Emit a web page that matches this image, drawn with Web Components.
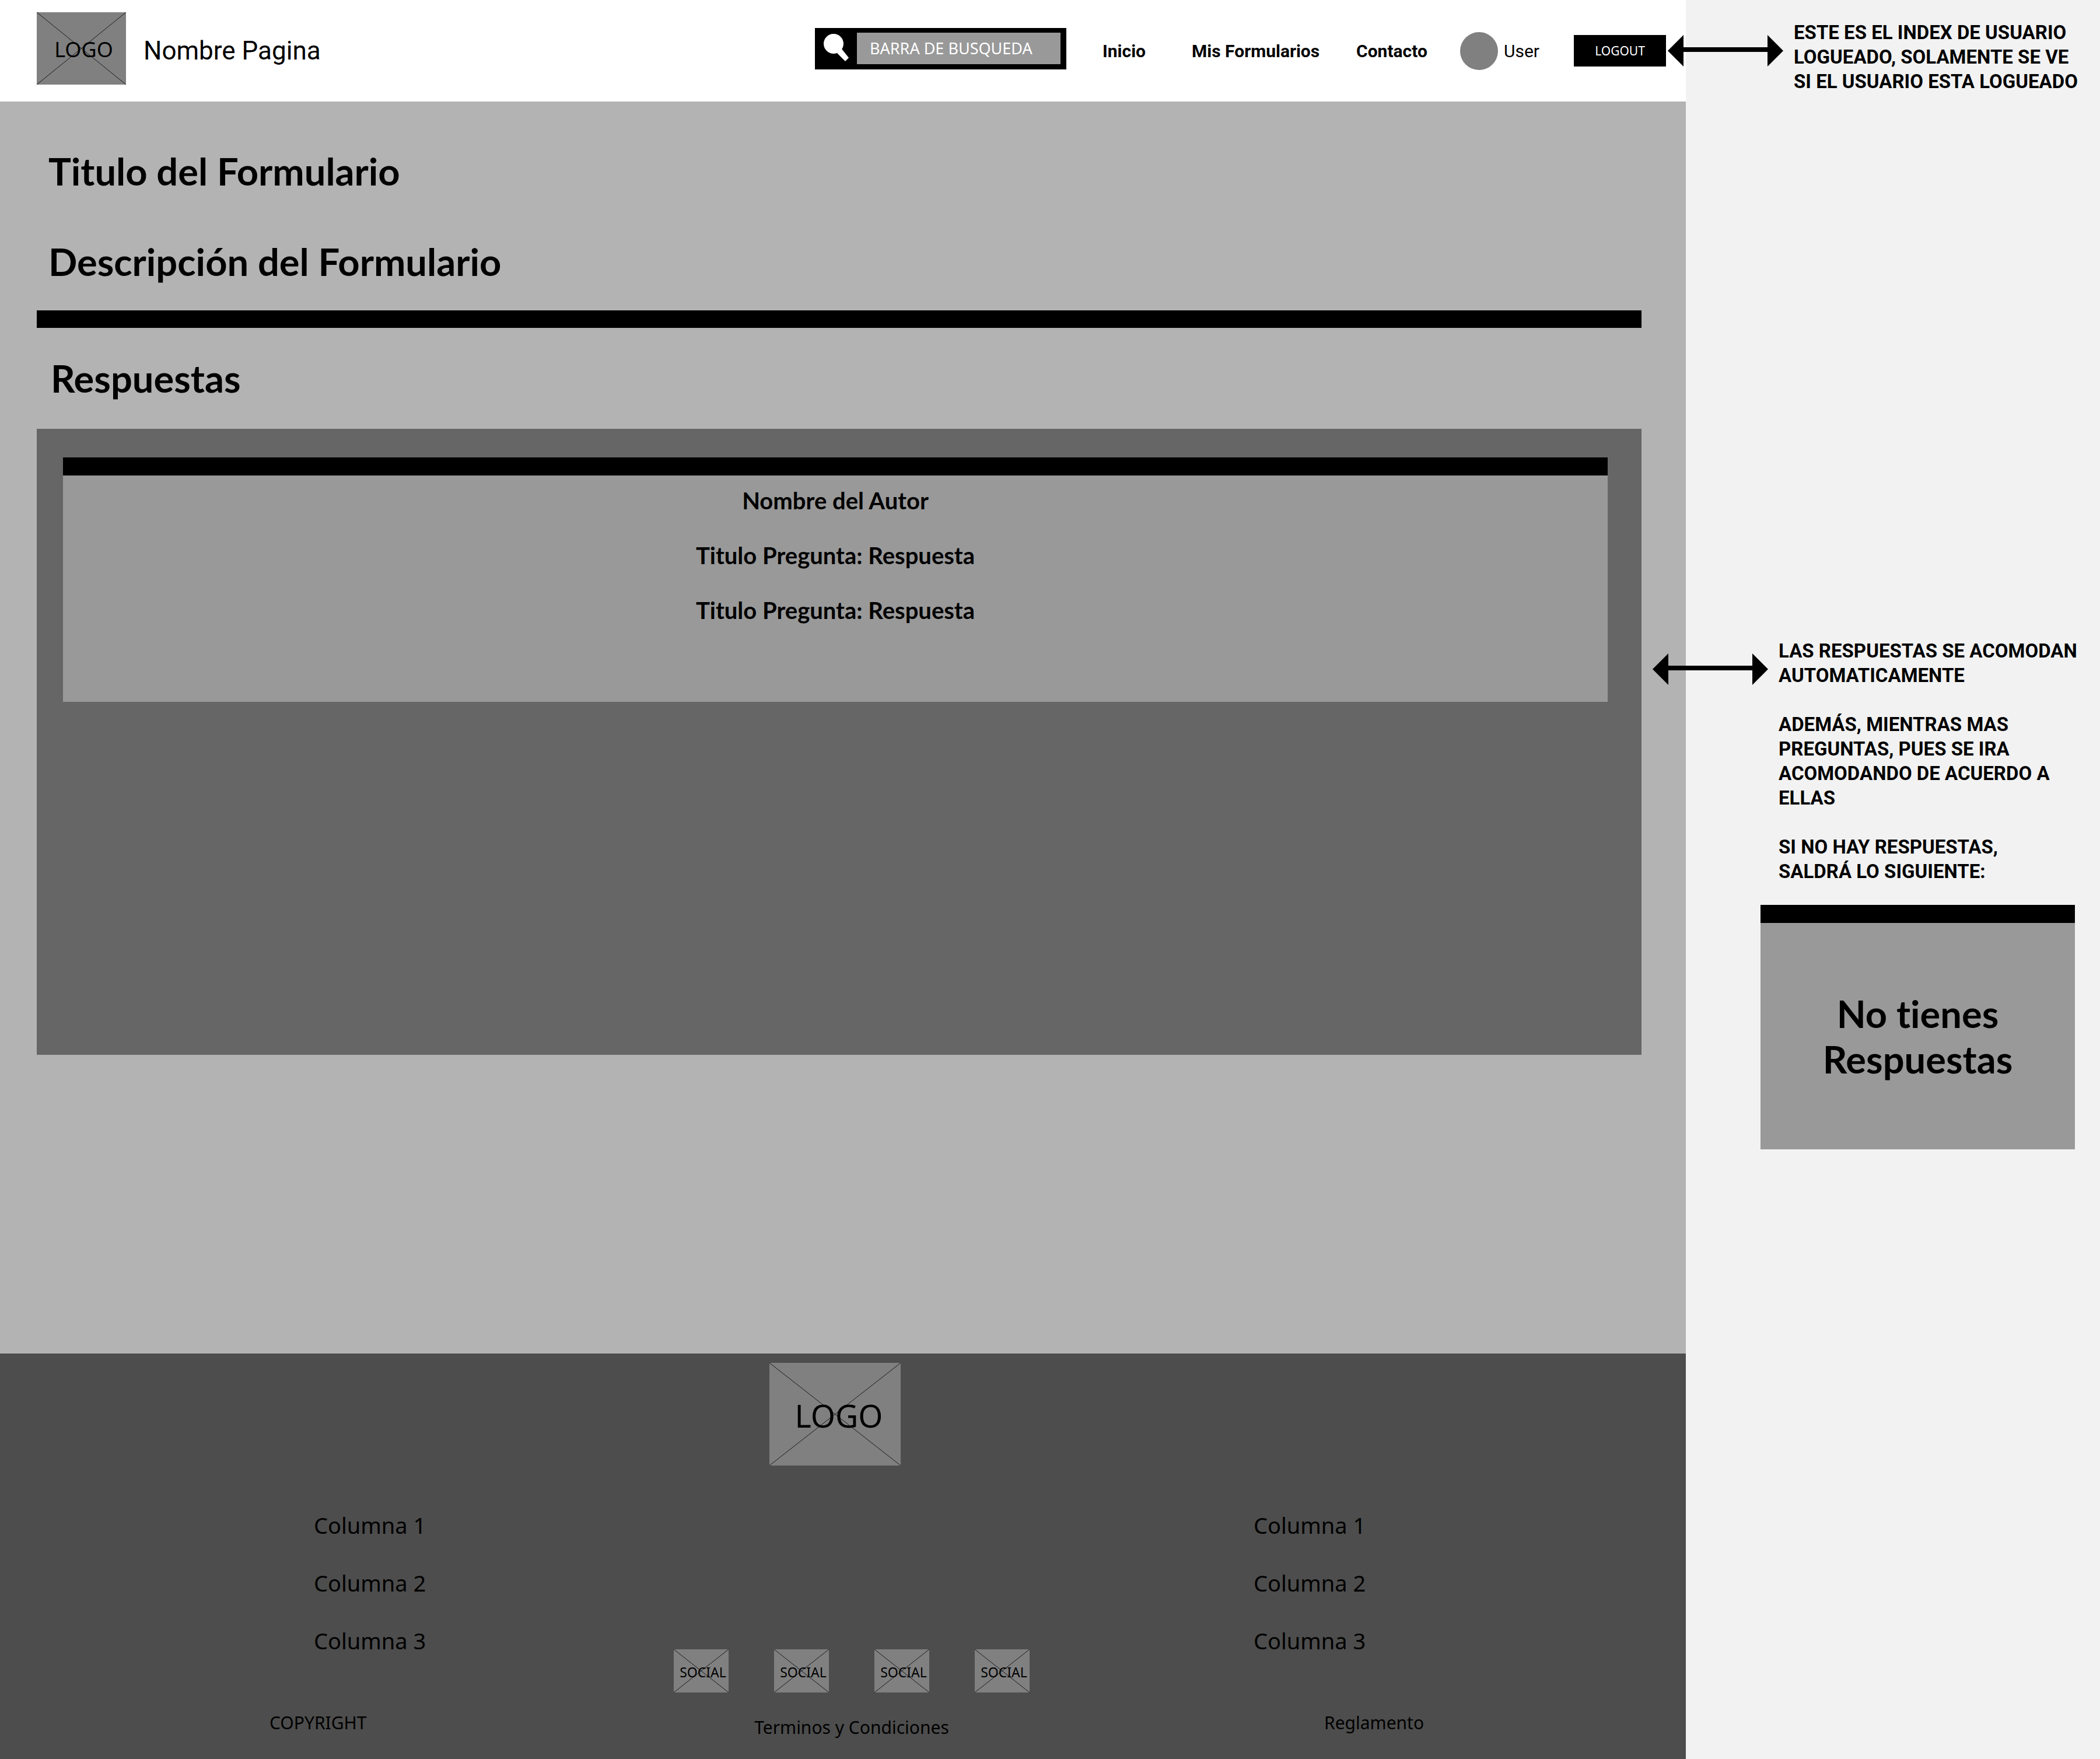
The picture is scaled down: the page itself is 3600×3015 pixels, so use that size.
<!DOCTYPE html>
<html lang="es">
<head>
<meta charset="utf-8">
<meta name="viewport" content="width=device-width, initial-scale=1">
<title>Respuestas del formulario</title>
<style>
  :root {
    --ink: #000;
    --white: #fff;
    --page: #b3b3b3;
    --panel: #666;
    --card: #999;
    --box: #808080;
    --footer: #4d4d4d;
    --aside: #f2f2f2;
    --ui: Roboto, "Liberation Sans", sans-serif;
    --title: Lato, "Liberation Sans", sans-serif;
    --plain: "Noto Sans", "Open Sans", sans-serif;
  }
  body { margin: 0; color: var(--ink); background: var(--aside); font-family: var(--ui); font-variant-ligatures: none; }
</style>
</head>
<body>
<wire-layout>
  <site-header slot="page"></site-header>
  <form-answers slot="page">
    <span slot="title">Titulo del Formulario</span>
    <span slot="description">Descripción del Formulario</span>
    <answer-card>
      <p>Nombre del Autor</p>
      <p>Titulo Pregunta: Respuesta</p>
      <p>Titulo Pregunta: Respuesta</p>
    </answer-card>
  </form-answers>
  <site-footer slot="page"></site-footer>

  <design-note slot="notes" class="session">
    <p>ESTE ES EL INDEX DE USUARIO<br>LOGUEADO, SOLAMENTE SE VE<br>SI EL USUARIO ESTA LOGUEADO</p>
  </design-note>
  <design-note slot="notes" class="answers">
    <p>LAS RESPUESTAS SE ACOMODAN<br>AUTOMATICAMENTE</p>
    <p>ADEMÁS, MIENTRAS MAS<br>PREGUNTAS, PUES SE IRA<br>ACOMODANDO DE ACUERDO A<br>ELLAS</p>
    <p>SI NO HAY RESPUESTAS,<br>SALDRÁ LO SIGUIENTE:</p>
  </design-note>
  <answer-card slot="notes" empty>
    <p>No tienes<br>Respuestas</p>
  </answer-card>
</wire-layout>

<script>
  class ShadowElement extends HTMLElement {
    constructor() {
      super();
      const template = document.createElement('template');
      template.innerHTML = this.constructor.markup;
      this.attachShadow({ mode: 'open' }).append(template.content.cloneNode(true));
    }
  }

  /* Page column on the left, design notes on the right */
  class WireLayout extends ShadowElement {
    static markup = `
      <style>
        :host { display: grid; grid-template-columns: minmax(0, 1fr) 710px; min-height: 100vh; }
        .page { display: flex; flex-direction: column; min-width: 0; }
        aside { display: flex; flex-direction: column; position: relative; box-sizing: border-box; padding: 35px 43px 0 0; }
        ::slotted(design-note.session) { margin-left: -31px; }
        ::slotted(design-note.answers) { margin: 934px 0 36px -57px; }
        ::slotted(answer-card) { margin-left: 128px; }
      </style>
      <div class="page"><slot name="page"></slot></div>
      <aside><slot name="notes"></slot></aside>`;
  }

  /* Placeholder picture: a crossed box with a caption */
  class ImageBox extends ShadowElement {
    static markup = `
      <style>
        :host { display: grid; flex: none; place-items: center; background: var(--box); font-family: var(--plain); line-height: 1; }
        svg, span { grid-area: 1 / 1; }
        svg { width: 100%; height: 100%; }
        line { stroke: #1a1a1a; stroke-width: 1; vector-effect: non-scaling-stroke; }
        span { padding-left: var(--shift, 8px); padding-top: 4px; }
      </style>
      <svg viewBox="0 0 100 100" preserveAspectRatio="none" aria-hidden="true">
        <line x1="0" y1="0" x2="100" y2="100"/><line x1="100" y1="0" x2="0" y2="100"/>
      </svg>
      <span><slot></slot></span>`;
  }

  class SearchBar extends ShadowElement {
    static markup = `
      <style>
        :host { display: block; flex: none; width: 431px; }
        form { display: flex; margin: 0; padding: 8px 10px 9px 0; background: var(--ink); }
        button { flex: none; width: 72px; padding: 0; border: 0; background: none; }
        svg { display: block; width: 72px; height: 54px; }
        input { flex: 1; min-width: 0; height: 54px; box-sizing: border-box; border: 0; border-radius: 0; padding: 0 22px; background: var(--card); color: var(--white); font: 27px/54px var(--plain); }
        input::placeholder { color: var(--white); opacity: 1; }
      </style>
      <form role="search">
        <button type="submit" aria-label="Buscar">
          <svg viewBox="0 0 72 54" aria-hidden="true">
            <circle cx="32" cy="19" r="17" fill="#fff"/>
            <path d="M38 35 L46 28 L58 43 L52 49 Z" fill="#fff"/>
          </svg>
        </button>
        <input type="search" aria-label="Barra de busqueda" placeholder="BARRA DE BUSQUEDA">
      </form>`;
  }

  class SiteHeader extends ShadowElement {
    static markup = `
      <style>
        :host { display: flex; align-items: center; box-sizing: border-box; height: 174px; padding: 0 34px 8px 63px; background: var(--white); font-family: var(--ui); font-size: 30px; }
        a { color: inherit; text-decoration: none; white-space: nowrap; }
        image-box { width: 153px; height: 124px; font-size: 36px; }
        .brand, nav { padding-top: 8px; }
        .brand { margin: 0 auto 0 30px; font-size: 44px; }
        nav { display: grid; grid-template-columns: 153px 282px 178px 195px 158px; align-items: center; margin-left: 62px; font-weight: 700; }
        .user { display: flex; align-items: center; gap: 10px; font-weight: 400; }
        .user i { width: 65px; height: 65px; border-radius: 50%; background: var(--box); }
        button { height: 54px; padding: 0; border: 0; background: var(--ink); color: var(--white); font: 21px var(--plain); }
      </style>
      <image-box>LOGO</image-box>
      <a class="brand" href="#">Nombre Pagina</a>
      <search-bar></search-bar>
      <nav>
        <a href="#">Inicio</a>
        <a href="#">Mis Formularios</a>
        <a href="#">Contacto</a>
        <a class="user" href="#"><i></i>User</a>
        <button type="button">LOGOUT</button>
      </nav>`;
  }

  class FormAnswers extends ShadowElement {
    static markup = `
      <style>
        :host { display: block; flex: 1; padding: 80px 76px 0 63px; background: var(--page); }
        h1, h2 { margin: 0; padding-left: 20px; font: 700 65px/78px var(--title); font-variant-ligatures: none; }
        .description { margin-top: 77px; }
        hr { height: 30px; margin: 45px 0 47px; border: 0; background: var(--ink); }
        h2 { padding-left: 24px; }
        section { box-sizing: border-box; min-height: 1073px; margin-top: 48px; padding: 49px 58px 49px 45px; background: var(--panel); }
      </style>
      <h1><slot name="title"></slot></h1>
      <h1 class="description"><slot name="description"></slot></h1>
      <hr>
      <h2>Respuestas</h2>
      <section><slot></slot></section>`;
  }

  class AnswerCard extends ShadowElement {
    static markup = `
      <style>
        :host { display: flex; flex-direction: column; gap: 46px; box-sizing: border-box; min-height: 419px; padding: 19px 20px; border-top: 31px solid var(--ink); background: var(--card); text-align: center; font: 700 40px/48px var(--title); font-variant-ligatures: none; }
        :host([empty]) { justify-content: center; font-size: 65px; line-height: 78px; }
        ::slotted(p) { margin: 0; }
      </style>
      <slot></slot>`;
  }

  class DesignNote extends ShadowElement {
    static markup = `
      <style>
        :host { display: flex; align-items: flex-start; gap: 18px; font: 700 33px/42px var(--ui); white-space: nowrap; }
        svg { flex: none; width: 198px; height: 54px; margin-top: 25px; }
        div { display: flex; flex-direction: column; gap: 42px; }
        ::slotted(p) { margin: 0; }
      </style>
      <svg viewBox="0 0 198 54" aria-hidden="true">
        <path d="M0 27 L27 0 V21 H171 V0 L198 27 L171 54 V29 H27 V54 Z"/>
      </svg>
      <div><slot></slot></div>`;
  }

  class SiteFooter extends ShadowElement {
    static markup = `
      <style>
        :host { display: block; box-sizing: border-box; min-height: 695px; padding-top: 16px; background: var(--footer); font: 30px/40px var(--plain); }
        a { color: inherit; text-decoration: none; }
        .logo { display: flex; justify-content: center; padding-right: 28px; }
        .logo image-box { width: 225px; height: 176px; font-size: 54px; --shift: 14px; }
        .row { display: grid; grid-template-columns: 1fr 610px 1fr; padding-left: 30px; }
        .links { padding-top: 77px; align-items: end; }
        ul { display: grid; gap: 49px; margin: 0; padding: 0 0 64px; list-style: none; font-size: 38px; line-height: 50px; }
        .left { padding-left: 508px; }
        .right { padding-left: 384px; }
        .social { display: flex; justify-content: space-between; }
        .social image-box { width: 94px; height: 74px; font-size: 23px; --shift: 6px; }
        .legal { padding-top: 32px; }
        .copyright { padding-left: 432px; }
        .terms { padding-top: 8px; text-align: center; }
        .rules { padding-left: 505px; }
      </style>
      <div class="logo"><image-box>LOGO</image-box></div>
      <div class="row links">
        <ul class="left"><li><a href="#">Columna 1</a></li><li><a href="#">Columna 2</a></li><li><a href="#">Columna 3</a></li></ul>
        <div class="social">
          <a href="#"><image-box>SOCIAL</image-box></a>
          <a href="#"><image-box>SOCIAL</image-box></a>
          <a href="#"><image-box>SOCIAL</image-box></a>
          <a href="#"><image-box>SOCIAL</image-box></a>
        </div>
        <ul class="right"><li><a href="#">Columna 1</a></li><li><a href="#">Columna 2</a></li><li><a href="#">Columna 3</a></li></ul>
      </div>
      <div class="row legal">
        <span class="copyright">COPYRIGHT</span>
        <a class="terms" href="#">Terminos y Condiciones</a>
        <a class="rules" href="#">Reglamento</a>
      </div>`;
  }

  customElements.define('image-box', ImageBox);
  customElements.define('search-bar', SearchBar);
  customElements.define('site-header', SiteHeader);
  customElements.define('form-answers', FormAnswers);
  customElements.define('answer-card', AnswerCard);
  customElements.define('design-note', DesignNote);
  customElements.define('site-footer', SiteFooter);
  customElements.define('wire-layout', WireLayout);
</script>
</body>
</html>
